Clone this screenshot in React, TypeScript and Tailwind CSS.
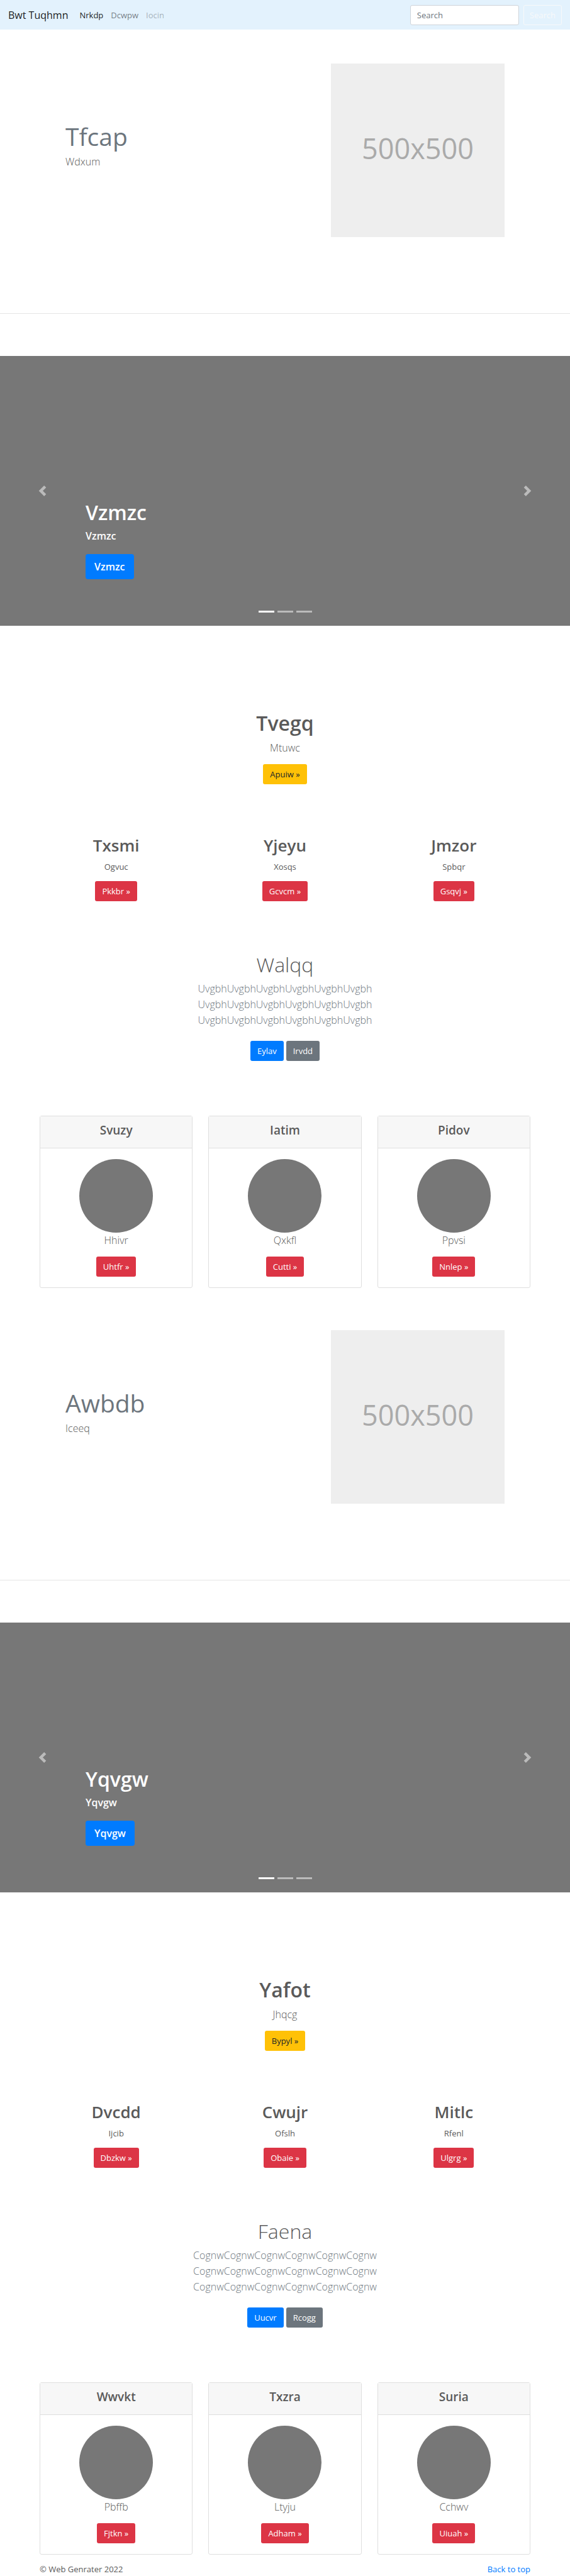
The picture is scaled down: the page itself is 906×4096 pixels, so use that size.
import type { ReactNode } from "react";

type Item = { title: string; text: string; action: string };

type Block = {
  hero: { title: string; text: string };
  slide: string;
  intro: Item;
  features: Item[];
  callout: { title: string; line: string; primary: string; secondary: string };
  cards: Item[];
};

const blocks: Block[] = [
  {
    hero: { title: "Tfcap", text: "Wdxum" },
    slide: "Vzmzc",
    intro: { title: "Tvegq", text: "Mtuwc", action: "Apuiw" },
    features: [
      { title: "Txsmi", text: "Ogvuc", action: "Pkkbr" },
      { title: "Yjeyu", text: "Xosqs", action: "Gcvcm" },
      { title: "Jmzor", text: "Spbqr", action: "Gsqvj" },
    ],
    callout: {
      title: "Walqq",
      line: "UvgbhUvgbhUvgbhUvgbhUvgbhUvgbh",
      primary: "Eylav",
      secondary: "Irvdd",
    },
    cards: [
      { title: "Svuzy", text: "Hhivr", action: "Uhtfr" },
      { title: "Iatim", text: "Qxkfl", action: "Cutti" },
      { title: "Pidov", text: "Ppvsi", action: "Nnlep" },
    ],
  },
  {
    hero: { title: "Awbdb", text: "Iceeq" },
    slide: "Yqvgw",
    intro: { title: "Yafot", text: "Jhqcg", action: "Bypyl" },
    features: [
      { title: "Dvcdd", text: "Ijcib", action: "Dbzkw" },
      { title: "Cwujr", text: "Ofslh", action: "Obaie" },
      { title: "Mitlc", text: "Rfenl", action: "Ulgrg" },
    ],
    callout: {
      title: "Faena",
      line: "CognwCognwCognwCognwCognwCognw",
      primary: "Uucvr",
      secondary: "Rcogg",
    },
    cards: [
      { title: "Wwvkt", text: "Pbffb", action: "Fjtkn" },
      { title: "Txzra", text: "Ltyju", action: "Adham" },
      { title: "Suria", text: "Cchwv", action: "Uiuah" },
    ],
  },
];

const tones = {
  yellow: "bg-[#ffc107] text-[#212529]",
  red: "bg-[#dc3545] text-white",
  blue: "bg-[#007bff] text-white",
  gray: "bg-[#6c757d] text-white",
};

function Button({ tone, children }: { tone: keyof typeof tones; children: ReactNode }) {
  return (
    <a
      href="#"
      className={`inline-flex h-8 items-center rounded-[3px] px-[11px] text-[13px] leading-5 ${tones[tone]}`}
    >
      {children}
    </a>
  );
}

function Navbar() {
  return (
    <nav className="flex h-[47px] items-center bg-[#e3f2fd] px-[13px]">
      <a href="#" className="mr-[18px] text-[16px] leading-6 text-black/90">
        Bwt Tuqhmn
      </a>
      <div className="flex flex-1 gap-3 text-[13px] leading-5">
        <a href="#" className="text-black/90">Nrkdp</a>
        <a href="#" className="text-black/50">Dcwpw</a>
        <a href="#" className="text-black/30">Iocin</a>
      </div>
      <form className="flex gap-[7px]" onSubmit={(e) => e.preventDefault()}>
        <input
          type="text"
          placeholder="Search"
          aria-label="Search"
          className="h-8 w-[173px] rounded-[3px] border border-[#ced4da] bg-white px-[10px] text-[13px] leading-5 placeholder:text-[#6c757d]"
        />
        <button
          type="submit"
          className="h-8 rounded-[3px] border border-[#f8f9fa] px-[9px] text-[13px] leading-5 text-[#f8f9fa]"
        >
          Search
        </button>
      </form>
    </nav>
  );
}

function Hero({ title, text }: Block["hero"]) {
  return (
    <section className="flex justify-between px-[104px] pt-[54px]">
      <div className="pt-[91px]">
        <h2 className="text-[39px] leading-[50px] text-[#6c757d]">{title}</h2>
        <p className="mt-[3px] text-[16px] leading-[25px] font-light">{text}</p>
      </div>
      <div
        role="img"
        aria-label="500x500"
        className="flex size-[276px] items-center justify-center bg-[#eeeeee] pb-2 text-[45px] leading-none text-[#aaaaaa]"
      >
        500x500
      </div>
    </section>
  );
}

function Carousel({ label }: { label: string }) {
  return (
    <section className="relative flex h-[429px] flex-col items-start justify-end bg-[#777777] px-[136px] pb-[74px] text-white">
      <h1 className="text-[32px] leading-10 font-semibold">{label}</h1>
      <p className="mt-[5px] text-[16px] leading-[25px] font-semibold">{label}</p>
      <a
        href="#"
        className="mt-4 inline-flex h-10 items-center rounded-[4px] bg-[#007bff] px-[14px] text-[16px] leading-6 font-semibold"
      >
        {label}
      </a>
      <button
        type="button"
        aria-label="Previous"
        className="absolute inset-y-0 left-0 flex w-[15%] items-center justify-center opacity-50"
      >
        <svg viewBox="0 0 8 8" className="size-[17px] fill-white">
          <path d="M5.25 0l-4 4 4 4 1.5-1.5L4.25 4l2.5-2.5L5.25 0z" />
        </svg>
      </button>
      <button
        type="button"
        aria-label="Next"
        className="absolute inset-y-0 right-0 flex w-[15%] items-center justify-center opacity-50"
      >
        <svg viewBox="0 0 8 8" className="size-[17px] fill-white">
          <path d="M2.75 0l-1.5 1.5L3.75 4l-2.5 2.5L2.75 8l4-4-4-4z" />
        </svg>
      </button>
      <ol className="absolute inset-x-0 bottom-[21px] flex justify-center gap-[5px]">
        <li className="h-[3px] w-[25px] bg-white" />
        <li className="h-[3px] w-[25px] bg-white/50" />
        <li className="h-[3px] w-[25px] bg-white/50" />
      </ol>
    </section>
  );
}

function Feature({ title, text, action }: Item) {
  return (
    <div>
      <h2 className="text-[26px] leading-8 font-semibold">{title}</h2>
      <p className="mt-2 mb-[13px] text-[13px] leading-5">{text}</p>
      <Button tone="red">{action} »</Button>
    </div>
  );
}

function Card({ title, text, action }: Item) {
  return (
    <article className="rounded-[3px] border border-[#dfdfdf] bg-white">
      <h3 className="border-b border-[#dfdfdf] bg-[#f7f7f7] pt-[10px] pb-4 text-[19px] leading-6 font-semibold">
        {title}
      </h3>
      <div className="flex flex-col items-center py-[17px]">
        <div className="size-[117px] rounded-full bg-[#777777]" />
        <p className="mb-[13px] text-[16px] leading-[25px] font-light">{text}</p>
        <Button tone="red">{action} »</Button>
      </div>
    </article>
  );
}

function PageBlock({ block }: { block: Block }) {
  const { hero, slide, intro, features, callout, cards } = block;
  return (
    <>
      <Hero {...hero} />
      <hr className="mt-[121px] mb-[67px] border-t border-[#e5e5e5]" />
      <Carousel label={slide} />
      <div className="mb-[13px] px-[63px] pt-[135px] text-center">
        <section className="flex flex-col items-center">
          <h2 className="text-[32px] leading-10 font-semibold">{intro.title}</h2>
          <p className="mt-[7px] mb-[13px] text-[16px] leading-[25px] font-light">{intro.text}</p>
          <Button tone="yellow">{intro.action} »</Button>
        </section>
        <section className="mt-[81px] grid grid-cols-3 gap-[25px]">
          {features.map((item) => (
            <Feature key={item.title} {...item} />
          ))}
        </section>
        <section className="mt-[81px]">
          <h2 className="text-[32px] leading-10 font-light">{callout.title}</h2>
          <p className="mt-[6px] text-[16px] leading-[25px] font-light text-[#6c757d]">
            {callout.line}
            <br />
            {callout.line}
            <br />
            {callout.line}
          </p>
          <div className="mt-5 flex justify-center gap-1">
            <Button tone="blue">{callout.primary}</Button>
            <Button tone="gray">{callout.secondary}</Button>
          </div>
        </section>
        <section className="mt-[87px] grid grid-cols-3 gap-[25px]">
          {cards.map((item) => (
            <Card key={item.title} {...item} />
          ))}
        </section>
      </div>
    </>
  );
}

export default function App() {
  return (
    <div className="bg-white font-['Open_Sans','Noto_Sans',sans-serif] text-[#5a5a5a]">
      <Navbar />
      <main>
        {blocks.map((block) => (
          <PageBlock key={block.slide} block={block} />
        ))}
      </main>
      <footer className="flex justify-between px-[63px] text-[13px] leading-5">
        <p>© Web Genrater 2022</p>
        <a href="#" className="text-[#007bff]">Back to top</a>
      </footer>
    </div>
  );
}
